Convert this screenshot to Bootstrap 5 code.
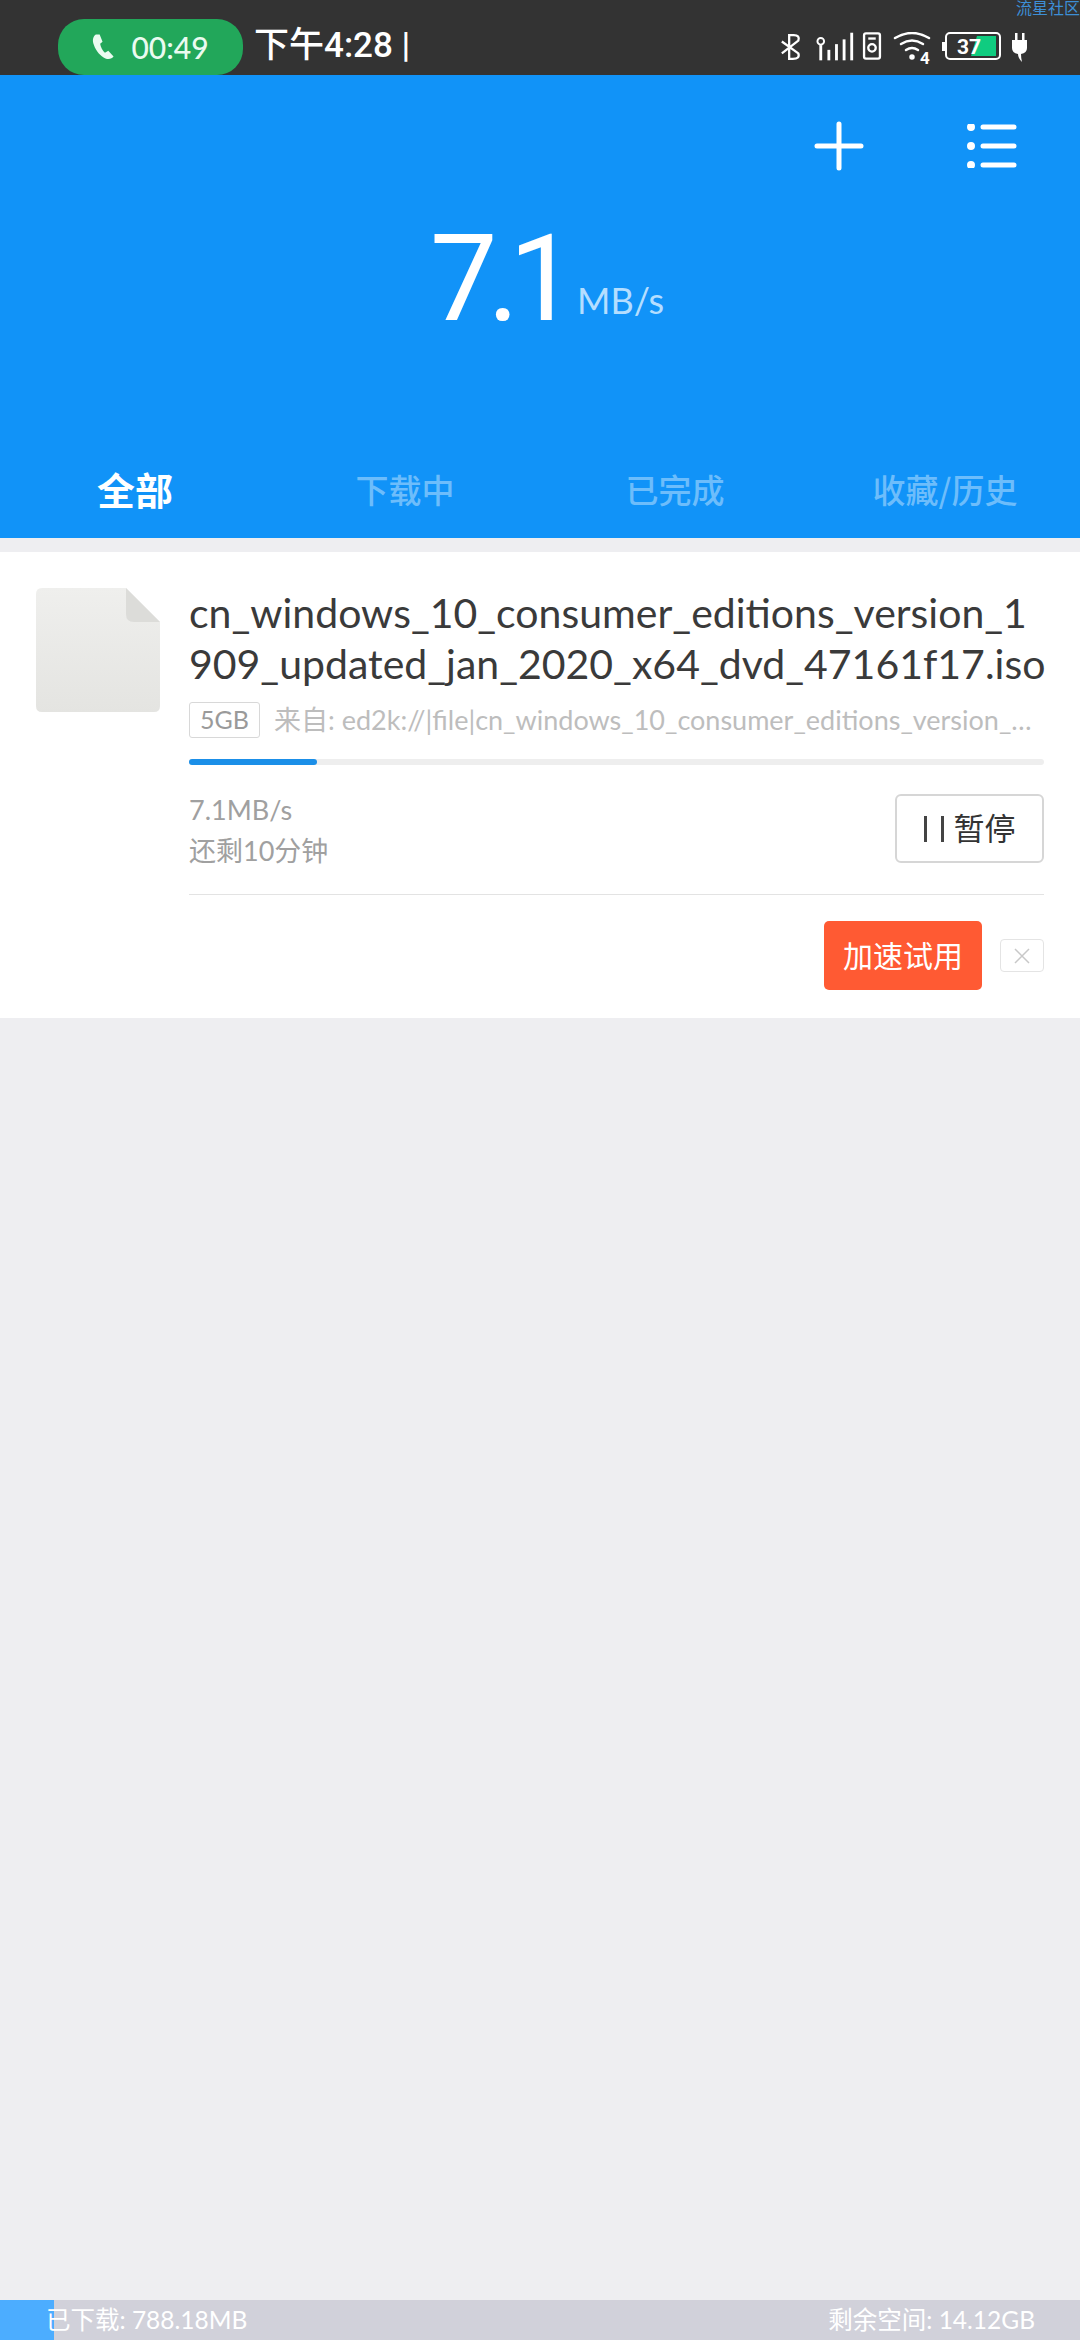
<!DOCTYPE html>
<html lang="zh-CN">
<head>
<meta charset="UTF-8">
<meta name="viewport" content="width=device-width, initial-scale=1.0">
<title>下载</title>
<link href="https://cdn.jsdelivr.net/npm/bootstrap@5.3.0/dist/css/bootstrap.min.css" rel="stylesheet">
<style>
    html, body { height: 100%; }
    body {
        width: 1080px;
        height: 2340px;
        background: #eeeef1;
        font-family: "Lato", "Noto Sans CJK SC", sans-serif;
        overflow: hidden;
    }
    .status-row { height: 75px; background: #333333; color: #fff; position: relative; padding-left: 58px; }
    .call-pill {
        width: 185px; height: 56px; margin-top: 19px;
        background: #22a75a; border-radius: 26px;
        font-size: 30px; font-weight: 500; color: #eafbf0;
        gap: 16px;
    }
    .clock-text { margin-left: 11px; margin-top: 18px; font-size: 35px; font-weight: 500; line-height: 56px; font-family: "Roboto", "Noto Sans CJK SC", sans-serif; }
    .status-icons { position: absolute; right: 0; top: 32px; height: 34px; width: 340px; }
    .status-icons svg { position: absolute; top: 0; }
    .status-icons text { font-family: "Roboto", sans-serif; font-weight: 700; fill: #fff; }
    .wm-text { position: absolute; right: 0; top: -3px; font-size: 16px; line-height: 22px; color: #3d8fd6; white-space: nowrap; }
    .blue-head { height: 463px; background: #1193f8; color: #fff; position: relative; }
    .head-tools { height: 142px; padding-right: 63px; gap: 103px; }
    .speed-box { height: 124px; padding-left: 430px; }
    .speed-num { width: 147px; flex: none; font-size: 120px; font-weight: 400; line-height: 124px; letter-spacing: -10px; font-family: "Roboto", sans-serif; }
    .speed-unit { font-size: 36px; font-weight: 400; margin-top: 56px; color: #b4deff; }
    .tab-row { position: absolute; left: 0; right: 0; bottom: 0; height: 80px; }
    .tab-item { width: 270px; text-align: center; font-size: 33px; font-weight: 500; color: #6dbdfb; line-height: 62px; font-family: "Noto Sans CJK SC", sans-serif; }
    .tab-item.on { color: #fff; font-size: 38px; font-weight: 700; }
    .task-card { margin-top: 14px; height: 466px; background: #fff; padding: 36px 36px 0 36px; gap: 29px; }
    .doc-icon { flex: 0 0 124px; width: 124px; height: 124px; }
    .task-body { flex: 1; min-width: 0; }
    .task-title { font-size: 41px; line-height: 51px; color: #3a3a3a; white-space: nowrap; margin-top: -1px; font-weight: 400; }
    .meta-row { margin-top: 13px; height: 36px; gap: 14px; }
    .size-tag { border: 1px solid #d8d8d8; border-radius: 3px; height: 36px; width: 71px; font-size: 25px; color: #9a9a9a; line-height: 33px; text-align: center; flex: none; }
    .from-text { font-size: 27px; color: #bdbdbd; white-space: nowrap; overflow: hidden; text-overflow: ellipsis; }
    .bar-track { height: 6px; margin-top: 21px; background: #eeeeee; border-radius: 3px; }
    .bar-fill { height: 6px; background: #1b8fe8; border-radius: 3px; }
    .info-row { height: 130px; border-bottom: 1px solid #e3e3e3; padding-top: 29px; }
    .rate-text { font-size: 27px; line-height: 41px; color: #a0a0a0; margin-top: -5px; }
    .pause-btn { width: 149px; height: 69px; border: 2px solid #d6d6d6; border-radius: 6px; font-size: 31px; color: #333; gap: 10px; background: #fff; }
    .pause-bars { width: 20px; height: 26px; border-left: 3px solid #444; border-right: 3px solid #444; }
    .promo-row { margin-top: 26px; gap: 18px; }
    .speed-btn { width: 158px; height: 69px; background: #ff5a33; color: #fff; border-radius: 5px; font-size: 30px; border: 0; padding: 0; }
    .close-tag { width: 44px; height: 33px; border: 1px solid #e4e4e4; border-radius: 4px; }
    .foot-bar { position: absolute; left: 0; right: 0; top: 2300px; width: 1080px; height: 40px; background: #d1d1da; color: #fff; font-size: 24.5px; line-height: 40px; padding: 0 45px 0 46px; }
    .foot-fill { position: absolute; left: 0; top: 0; bottom: 0; width: 54px; background: #4cadff; }
    .foot-text { position: relative; }
</style>
</head>
<body>
    <div class="status-row d-flex">
        <div class="call-pill d-flex align-items-center justify-content-center">
            <svg width="23" height="28" viewBox="0 0 24 28"><path d="M4 1 C1 3 0 7 2 12 C4 18 9 24 14 26 C18 27.500 21 26 22.500 24 L17 18 L13.500 20 C11 18 9 14 8.500 10.500 L11 8.500 L8 1 Z" fill="#eafbf0"/></svg>
            <span>00:49</span>
        </div>
        <div class="clock-text">下午4:28 |</div>
        <div class="status-icons">
            <svg style="left:40px" width="22" height="30" viewBox="0 0 24 30" fill="none" stroke="#fff" stroke-width="2.500"><path d="M2 9 L20 22 Q22 28 14 28 H10 V2 H15 Q22 2 20 8 L2 22"/></svg>
            <svg style="left:76px" width="40" height="30" viewBox="0 0 42 30" fill="#fff"><circle cx="5" cy="9" r="3.500" fill="none" stroke="#fff" stroke-width="2"/><rect x="3.500" y="13" width="3" height="16"/><rect x="12" y="18" width="3" height="11"/><rect x="20" y="12" width="3" height="17"/><rect x="28" y="7" width="3" height="22"/><rect x="36" y="0" width="3" height="29"/></svg>
            <svg style="left:122px" width="20" height="28" viewBox="0 0 20 30" fill="none" stroke="#fff" stroke-width="2.500"><rect x="1.500" y="1.500" width="17" height="27" rx="2"/><circle cx="10" cy="17" r="4"/><path d="M6 7 H14"/></svg>
            <svg style="left:153px" width="44" height="42" viewBox="0 0 44 42" fill="none" stroke="#fff" stroke-width="2.500" stroke-linecap="round"><path d="M2 6 Q19 -4 36 6"/><path d="M8 12 Q19 5 30 12"/><path d="M13 18 Q19 14 25 18"/><circle cx="19" cy="25" r="1.500" fill="#fff"/><text x="27" y="32" font-size="17" stroke="none">4</text></svg>
            <svg style="left:202px" width="60" height="28" viewBox="0 0 60 28"><path d="M0 10 H3 V19 H0 Z" fill="#fff"/><rect x="4" y="1" width="54" height="26" rx="4" fill="none" stroke="#fff" stroke-width="2"/><path d="M35 4 H54 V24 H29 Z" fill="#10cc80"/><text x="15" y="22" font-size="21">37</text></svg>
            <svg style="left:272px" width="16" height="30" viewBox="0 0 16 30" fill="#fff"><rect x="3" y="1" width="2.500" height="8"/><rect x="10" y="1" width="2.500" height="8"/><path d="M0 8 H15 V16 Q15 21 9 22 Q9 26 10 30 Q6 26 6 22 Q0 21 0 16 Z"/></svg>
        </div>
        <div class="wm-text">流星社区</div>
    </div>

    <div class="blue-head">
        <div class="head-tools d-flex justify-content-end align-items-center">
            <svg width="50" height="50" viewBox="0 0 50 50" fill="none" stroke="#fff" stroke-width="5" stroke-linecap="round"><path d="M25 3 V47 M3 25 H47"/></svg>
            <svg width="50" height="44" viewBox="0 0 50 44" fill="#fff" stroke="#fff" stroke-width="5" stroke-linecap="round"><circle cx="4" cy="3" r="1.500"/><circle cx="4" cy="22" r="1.500"/><circle cx="4" cy="41" r="1.500"/><path d="M16 3 H47 M16 22 H47 M16 41 H47"/></svg>
        </div>
        <div class="speed-box d-flex">
            <span class="speed-num">7.1</span>
            <span class="speed-unit">MB/s</span>
        </div>
        <div class="tab-row d-flex">
            <div class="tab-item on">全部</div>
            <div class="tab-item">下载中</div>
            <div class="tab-item">已完成</div>
            <div class="tab-item">收藏/历史</div>
        </div>
    </div>

    <div class="task-card d-flex">
        <svg class="doc-icon" viewBox="0 0 124 124">
            <defs><linearGradient id="docGrad" x1="0" y1="0" x2="0" y2="1"><stop offset="0" stop-color="#efefed"/><stop offset="1" stop-color="#e4e4e1"/></linearGradient></defs>
            <path d="M6 0 H90 L124 34 V118 Q124 124 118 124 H6 Q0 124 0 118 V6 Q0 0 6 0 Z" fill="url(#docGrad)"/>
            <path d="M90 0 L124 34 H98 Q90 34 90 26 Z" fill="#dcdcd9"/>
        </svg>
        <div class="task-body">
            <div class="task-title">cn_windows_10_consumer_editions_version_1<br>909_updated_jan_2020_x64_dvd_47161f17.iso</div>
            <div class="meta-row d-flex align-items-center">
                <span class="size-tag">5GB</span>
                <span class="from-text">来自: ed2k://|file|cn_windows_10_consumer_editions_version_1909_updated_jan_2020_x64_dvd_47161f17.iso</span>
            </div>
            <div class="bar-track"><div class="bar-fill" style="width:15%"></div></div>
            <div class="info-row d-flex justify-content-between">
                <div class="rate-text">7.1MB/s<br>还剩10分钟</div>
                <button class="pause-btn d-flex align-items-center justify-content-center p-0" type="button"><span class="pause-bars"></span>暂停</button>
            </div>
            <div class="promo-row d-flex justify-content-end align-items-center">
                <button class="speed-btn" type="button">加速试用</button>
                <div class="close-tag d-flex align-items-center justify-content-center">
                    <svg width="18" height="18" viewBox="0 0 18 18" stroke="#c8c8c8" stroke-width="1.500"><path d="M2 2 L16 16 M16 2 L2 16"/></svg>
                </div>
            </div>
        </div>
    </div>

    <div class="foot-bar d-flex justify-content-between">
        <div class="foot-fill"></div>
        <span class="foot-text">已下载: 788.18MB</span>
        <span class="foot-text">剩余空间: 14.12GB</span>
    </div>
    <script src="https://cdn.jsdelivr.net/npm/bootstrap@5.3.0/dist/js/bootstrap.bundle.min.js"></script>
</body>
</html>
